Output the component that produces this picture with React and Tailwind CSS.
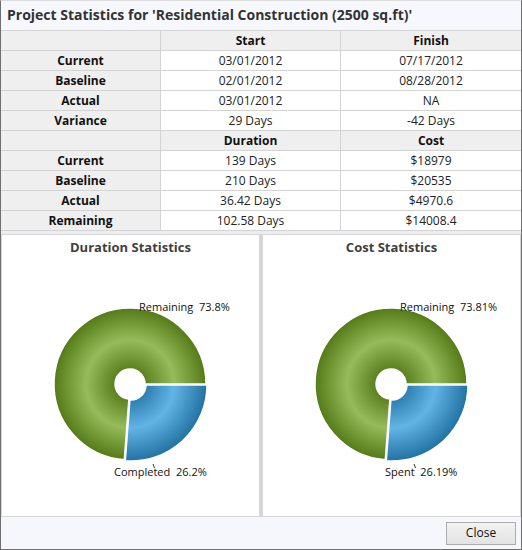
import React from 'react';

const font = { fontFamily: '"Open Sans", "Noto Sans", sans-serif' };

const dateRows = [
  ['Current', '03/01/2012', '07/17/2012'],
  ['Baseline', '02/01/2012', '08/28/2012'],
  ['Actual', '03/01/2012', 'NA'],
  ['Variance', '29 Days', '-42 Days'],
];

const costRows = [
  ['Current', '139 Days', '$18979'],
  ['Baseline', '210 Days', '$20535'],
  ['Actual', '36.42 Days', '$4970.6'],
  ['Remaining', '102.58 Days', '$14008.4'],
];

function HeaderRow({ a, b }) {
  return (
    <div className="grid grid-cols-[160px_180px_1fr] h-[20px] border-b border-[#d3d3d3] bg-[#efefef] text-[12px] font-bold text-[#111]">
      <div className="border-r border-[#d3d3d3]" />
      <div className="border-r border-[#d3d3d3] flex items-center justify-center pt-[1px]">{a}</div>
      <div className="flex items-center justify-center pt-[1px]">{b}</div>
    </div>
  );
}

function DataRow({ row }) {
  return (
    <div className="grid grid-cols-[160px_180px_1fr] h-[20px] border-b border-[#d3d3d3] text-[12px] text-[#222]">
      <div className="border-r border-[#d3d3d3] bg-[#efefef] flex items-center justify-center font-bold text-[#111]">{row[0]}</div>
      <div className="border-r border-[#d3d3d3] bg-white flex items-center justify-center">{row[1]}</div>
      <div className="bg-white flex items-center justify-center">{row[2]}</div>
    </div>
  );
}

function sector(cx, cy, r, ri, a0, a1) {
  const rad = (d) => (d * Math.PI) / 180;
  const p = (rr, a) => [cx + rr * Math.cos(rad(a)), cy + rr * Math.sin(rad(a))];
  const large = a1 - a0 > 180 ? 1 : 0;
  const [x0, y0] = p(r, a0);
  const [x1, y1] = p(r, a1);
  const [x2, y2] = p(ri, a1);
  const [x3, y3] = p(ri, a0);
  return `M${x0} ${y0} A${r} ${r} 0 ${large} 1 ${x1} ${y1} L${x2} ${y2} A${ri} ${ri} 0 ${large} 0 ${x3} ${y3} Z`;
}

function Donut({ id, title, topLabel, bottomLabel, bottomX, tickX }) {
  const cx = 128;
  const cy = 125;
  const r = 76;
  const ri = 15;
  const split = 94.3;
  return (
    <div className="flex-1 bg-white border border-[#d6d6d6] flex flex-col">
      <div className="h-[24px] pt-[3px] text-center text-[13px] font-bold text-[#3f3f3f]">{title}</div>
      <svg width="256" height="258" className="block">
        <defs>
          <radialGradient id={`g-${id}`} gradientUnits="userSpaceOnUse" cx={cx} cy={cy} r={r}>
            <stop offset="0.2" stopColor="#5a8020" />
            <stop offset="0.58" stopColor="#95bb5a" />
            <stop offset="1" stopColor="#557a18" />
          </radialGradient>
          <radialGradient id={`b-${id}`} gradientUnits="userSpaceOnUse" cx={cx} cy={cy} r={r}>
            <stop offset="0.2" stopColor="#2b7dad" />
            <stop offset="0.58" stopColor="#62b4e5" />
            <stop offset="1" stopColor="#2475a5" />
          </radialGradient>
        </defs>
        <path d={sector(cx, cy, r, ri, split, 360)} fill={`url(#g-${id})`} stroke="#fff" strokeWidth="1.5" />
        <path d={sector(cx + 1, cy + 1, r, ri, 0, split)} fill={`url(#b-${id})`} stroke="#fff" strokeWidth="1.5" />
        <circle cx={cx} cy={cy} r={ri} fill="#fff" />
        <line x1={tickX} y1={cy + 80} x2={tickX + 1.5} y2={cy + 84} stroke="#333" strokeWidth="1" />
        <text x="137" y={cy - 73} fontSize="11" fill="#111" style={font} xmlSpace="preserve">{topLabel}</text>
        <text x={bottomX} y={cy + 92} fontSize="11" fill="#111" style={font} xmlSpace="preserve">{bottomLabel}</text>
      </svg>
    </div>
  );
}

export default function App() {
  return (
    <div className="w-[522px] h-[550px] flex flex-col bg-[#f6f8fc] border-x border-b border-[#6f6f6f] border-t border-t-[#dcdcdc]" style={font}>
      <div className="h-[30px] flex items-center pl-[6px] pb-[2px] text-[14px] font-bold text-[#333] bg-[#f6f8fd] border-b border-[#d3d3d3]">
        Project Statistics for 'Residential Construction (2500 sq.ft)'
      </div>
      <div>
        <HeaderRow a="Start" b="Finish" />
        {dateRows.map((r) => (
          <DataRow key={'d' + r[0]} row={r} />
        ))}
        <HeaderRow a="Duration" b="Cost" />
        {costRows.map((r) => (
          <DataRow key={'c' + r[0]} row={r} />
        ))}
      </div>
      <div className="h-[3px] bg-[#ebedf2]" />
      <div className="flex h-[283px] gap-[2px] bg-[#d6d6d6]">
        <Donut id="dur" title="Duration Statistics" topLabel="Remaining  73.8%" bottomLabel="Completed  26.2%" bottomX={112} tickX={151} />
        <Donut id="cost" title="Cost Statistics" topLabel="Remaining  73.81%" bottomLabel="Spent  26.19%" bottomX={122} tickX={151} />
      </div>
      <div className="flex-1 flex items-center justify-end pr-[5px] bg-[#f6f7fc]">
        <button className="w-[70px] h-[23px] border border-[#acacac] bg-gradient-to-b from-[#f2f2f2] to-[#e3e3e3] text-[12px] text-[#111]">
          Close
        </button>
      </div>
    </div>
  );
}
